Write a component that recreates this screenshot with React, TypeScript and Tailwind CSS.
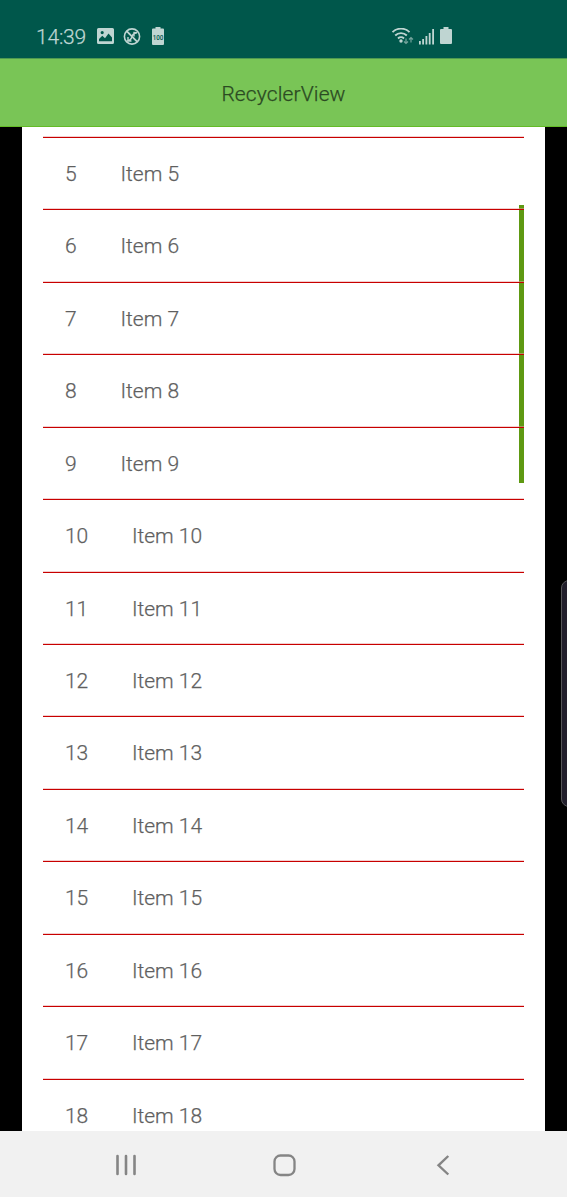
const rows = Array.from({ length: 14 }, (_, i) => i + 5);

function StatusBar() {
  return (
    <header className="flex h-[58px] shrink-0 items-start bg-[#00574b] pt-[25px] pl-9 text-[#bfd5d2]">
      <span className="w-[61px] text-[21px] leading-6 tracking-[-0.2px]">14:39</span>
      <svg className="mt-[3px]" width="17" height="17" viewBox="0 0 17 17" fill="currentColor">
        <path fillRule="evenodd" d="M1.500 0h14A1.500 1.500 0 0 1 17 1.500v13a1.500 1.500 0 0 1-1.500 1.500h-14A1.500 1.500 0 0 1 0 14.500v-13A1.500 1.500 0 0 1 1.500 0ZM2 13.300h13V9.500L11.500 5.500 8 10.200 5.300 7.800 2 11ZM5.200 3a1.600 1.600 0 1 0 0 3.200 1.600 1.600 0 0 0 0-3.200Z" />
      </svg>
      <svg className="mt-[3px] ml-[9px]" width="18" height="18" viewBox="0 0 18 18" fill="none" stroke="currentColor">
        <circle cx="9" cy="8.500" r="7.600" strokeWidth="1.600" />
        <path d="m3.700 3.200 10.600 10.600" strokeWidth="1.800" />
        <path d="M4 13c3.500-.5 4.500-2.200 5-4.500.4-2 1-3.200 4.500-3.500M11 8.500V4.500l3 .2M5 9v4h3.500" strokeWidth="1.400" />
      </svg>
      <svg className="mt-[2px] ml-[10px]" width="14" height="19" viewBox="0 0 14 19">
        <path d="M4.500 0h5v1.500H12a1 1 0 0 1 1 1V17a1 1 0 0 1-1 1H2a1 1 0 0 1-1-1V2.500a1 1 0 0 1 1-1h2.500Z" fill="currentColor" />
        <text x="7" y="12.800" textAnchor="middle" fontSize="6.300" fontWeight="500" fill="#00574b">100</text>
      </svg>
      <svg className="mt-[3px] ml-[226px]" width="24" height="18" viewBox="0 0 24 18" fill="none" stroke="currentColor">
        <path d="M1.500 4.200a12 12 0 0 1 17 0M4.200 7.500a8.200 8.200 0 0 1 11.600 0M7 10.500a4.300 4.300 0 0 1 6 0" strokeWidth="1.900" />
        <circle cx="10" cy="13" r="1.700" fill="currentColor" stroke="none" />
        <path d="M15 10.500v5m-2-2 2 2 2-2M20 14.500v-5m-2 2 2-2 2 2" strokeWidth="1.200" opacity=".6" />
      </svg>
      <svg className="mt-1 ml-1" width="16" height="16" viewBox="0 0 16 16" fill="currentColor">
        <path d="M0 12h1.800v3.500H0zM3.200 10H5v5.500H3.200zM6.500 7h1.800v8.500H6.500zM9.800 4h1.800v11.500H9.800zM13.200 0H15v15.500h-1.800z" />
      </svg>
      <svg className="mt-[2px] ml-[5px]" width="12" height="18" viewBox="0 0 12 18" fill="currentColor">
        <path d="M3.500 0h5v2H11a1 1 0 0 1 1 1v13a1 1 0 0 1-1 1H1a1 1 0 0 1-1-1V3a1 1 0 0 1 1-1h2.500Z" />
      </svg>
    </header>
  );
}

function NavigationBar() {
  return (
    <nav className="h-[66px] shrink-0 bg-[#f1f1f1]">
      <svg width="567" height="66" viewBox="0 0 567 66" fill="none" stroke="#858585" strokeLinecap="round" strokeLinejoin="round">
        <path d="M117.500 25v18M126 25v18M134.500 25v18" strokeWidth="2.600" />
        <rect x="274.500" y="24.500" width="20" height="19.500" rx="6" strokeWidth="2.300" />
        <path d="m448.300 25-9.800 9.300 9.800 9.200" strokeWidth="2.400" strokeLinecap="butt" strokeLinejoin="miter" />
      </svg>
    </nav>
  );
}

export default function App() {
  return (
    <div className="relative flex h-[1197px] w-[567px] flex-col overflow-hidden bg-black font-['Roboto',sans-serif] font-light [-webkit-text-stroke:0.25px]">
      <StatusBar />
      <div className="flex h-[69px] shrink-0 items-center justify-center border-t border-b border-t-[#4f9a50] border-b-[#64bb27] bg-[#79c556] pt-[4px] text-[21px] tracking-[0.12px] text-[#2b4a22]">
        RecyclerView
      </div>
      <div className="absolute top-[205px] left-[519px] h-[278px] w-[5px] bg-[#5e9912]" />
      <main className="mx-[22px] h-[1004px] overflow-hidden bg-white pt-[9.950px] pr-[21px] pl-[21px]">
        <ul className="relative">
          {rows.map((n) => (
            <li key={n} className="h-[72.450px] text-[21px] whitespace-nowrap text-[#5f5f5f]">
              <div className="h-px bg-[#c80000] shadow-[0_-1px_0_#e8a0a080]" />
              <div className="flex h-[71.450px] items-center pt-[2px] pl-[22px]">
                <span className="mr-11 tracking-[-0.2px]">{n}</span>
                <span>Item {n}</span>
              </div>
            </li>
          ))}
        </ul>
      </main>
      <NavigationBar />
      <div className="absolute top-[580px] left-[561px] h-[227px] w-3 rounded-l-lg border border-[#555558] bg-[#211e2b]" />
    </div>
  );
}
